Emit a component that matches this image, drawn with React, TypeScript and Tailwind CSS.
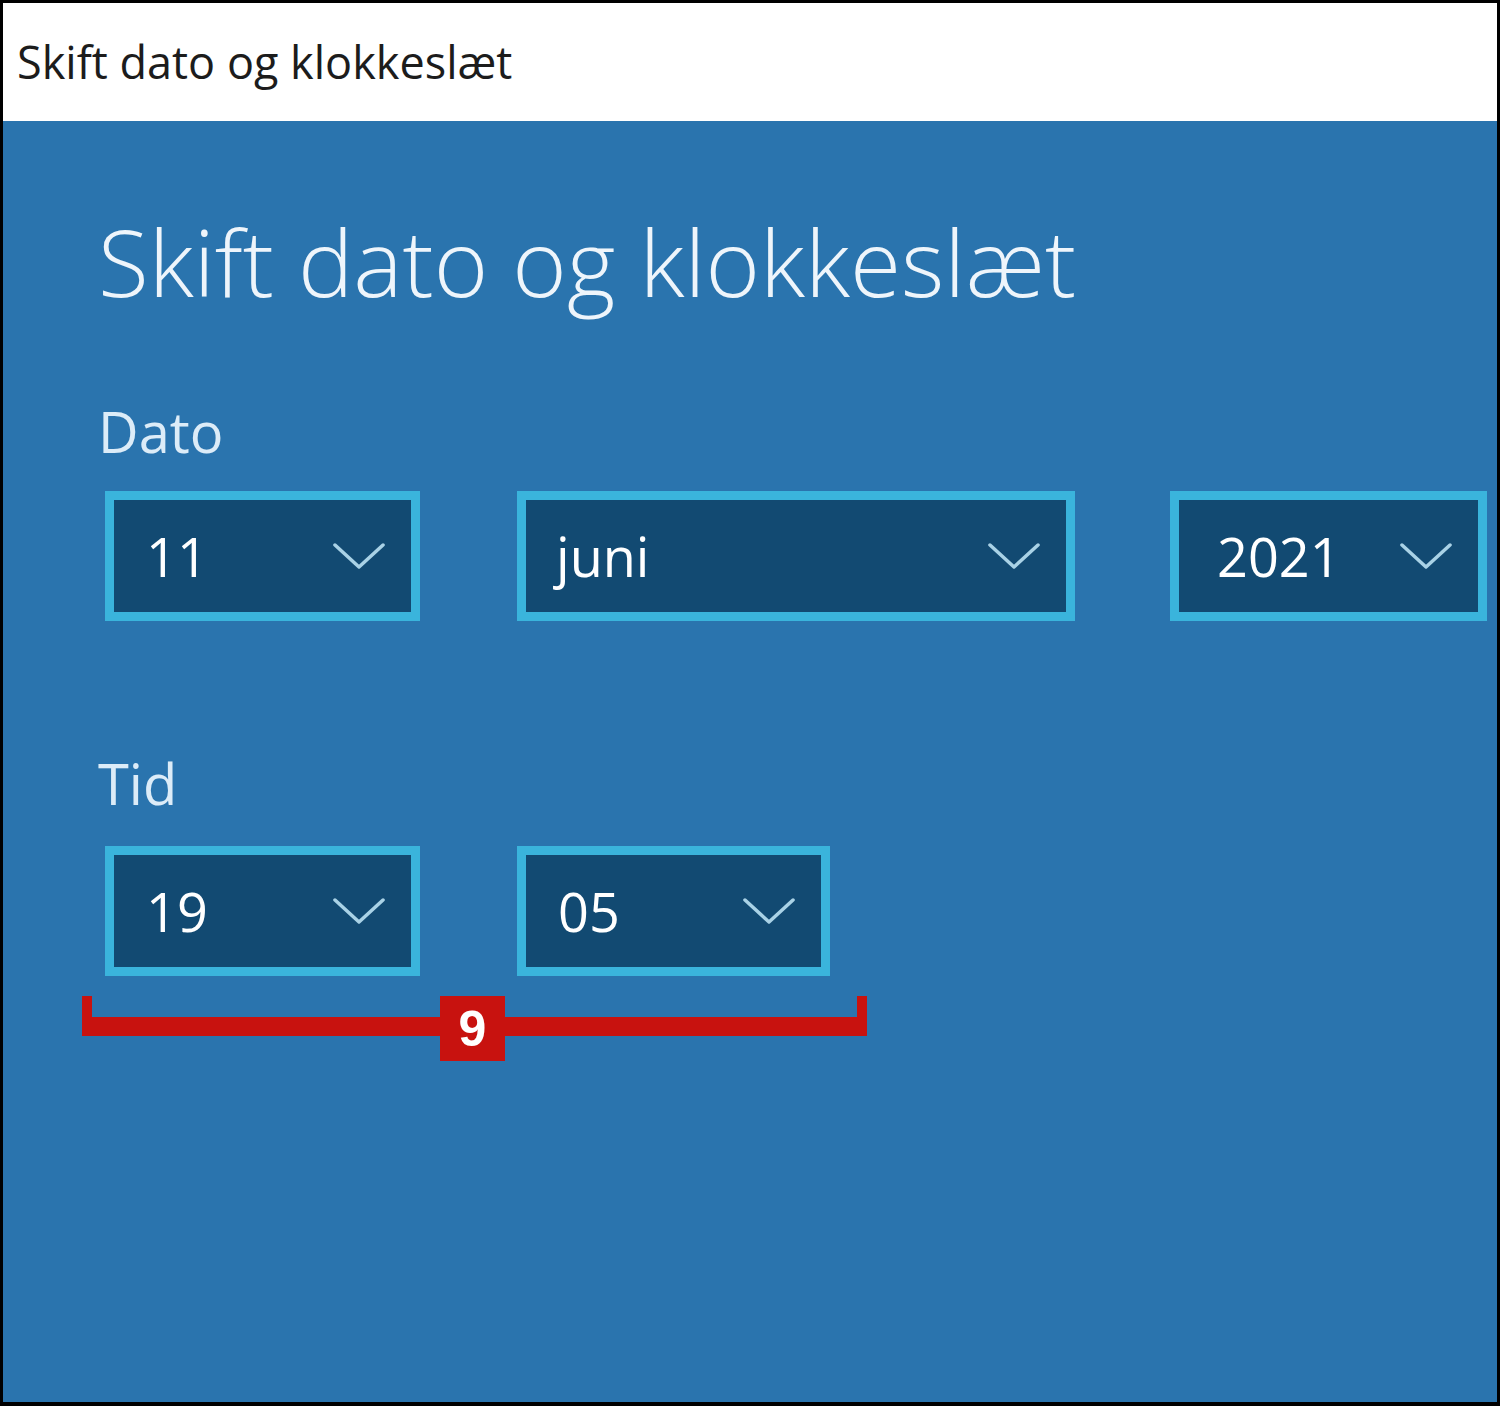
import React from "react";

const font = { fontFamily: "'Open Sans', 'Noto Sans', sans-serif" };

const Chevron = () => (
  <svg width="52" height="28" viewBox="0 0 52 28" fill="none">
    <polyline
      points="2,3 26,25 50,3"
      stroke="#a9d2e6"
      strokeWidth="3.5"
      strokeLinecap="round"
      strokeLinejoin="round"
    />
  </svg>
);

type PickerProps = { value: string; width: string; pad?: string };

const Picker = ({ value, width, pad = "pl-[32px]" }: PickerProps) => (
  <div
    className={`${width} ${pad} h-[130px] shrink-0 border-[9px] border-[#3ab4dc] bg-[#124a72] flex items-center justify-between pr-[26px]`}
  >
    <span className="text-[54px] leading-[60px] text-white">{value}</span>
    <Chevron />
  </div>
);

const App = () => {
  return (
    <div
      className="w-[1500px] h-[1406px] border-[3px] border-b-[4px] border-black flex flex-col overflow-hidden"
      style={font}
    >
      {/* title bar */}
      <div className="h-[118px] shrink-0 bg-white pl-[14px] flex items-center">
        <span className="text-[45px] leading-[118px] text-[#1c1c1c]">
          Skift dato og klokkeslæt
        </span>
      </div>

      {/* content */}
      <div className="flex-1 bg-[#2a74ae] pl-[95px]">
        <h1 className="mt-[90px] text-[93px] leading-[100px] font-light text-[#eef5fb] whitespace-nowrap">
          Skift dato og klokkeslæt
        </h1>

        <div className="mt-[90px] text-[56px] leading-[60px] font-medium text-[#dcecf8]">
          Dato
        </div>
        <div className="mt-[30px] ml-[7px] flex">
          <Picker value="11" width="w-[315px]" />
          <div className="ml-[97px]">
            <Picker value="juni" width="w-[558px]" pad="pl-[30px]" />
          </div>
          <div className="ml-[95px]">
            <Picker value="2021" width="w-[317px]" pad="pl-[38px]" />
          </div>
        </div>

        <div className="mt-[132px] text-[56px] leading-[60px] font-medium text-[#dcecf8]">
          Tid
        </div>
        <div className="mt-[33px] ml-[7px] flex">
          <Picker value="19" width="w-[315px]" />
          <div className="ml-[97px]">
            <Picker value="05" width="w-[313px]" />
          </div>
        </div>

        {/* annotation bracket */}
        <div className="relative mt-[20px] -ml-[16px] w-[785px] h-[40px] border-l-[10px] border-r-[10px] border-b-[19px] border-[#c8120f]">
          <div className="absolute left-[348px] top-0 w-[65px] h-[65px] bg-[#c8120f] flex items-center justify-center">
            <span
              className="text-[50px] leading-none font-bold text-white"
              style={{ fontFamily: "'Liberation Sans', Arial, sans-serif" }}
            >
              9
            </span>
          </div>
        </div>
      </div>
    </div>
  );
};

export default App;
